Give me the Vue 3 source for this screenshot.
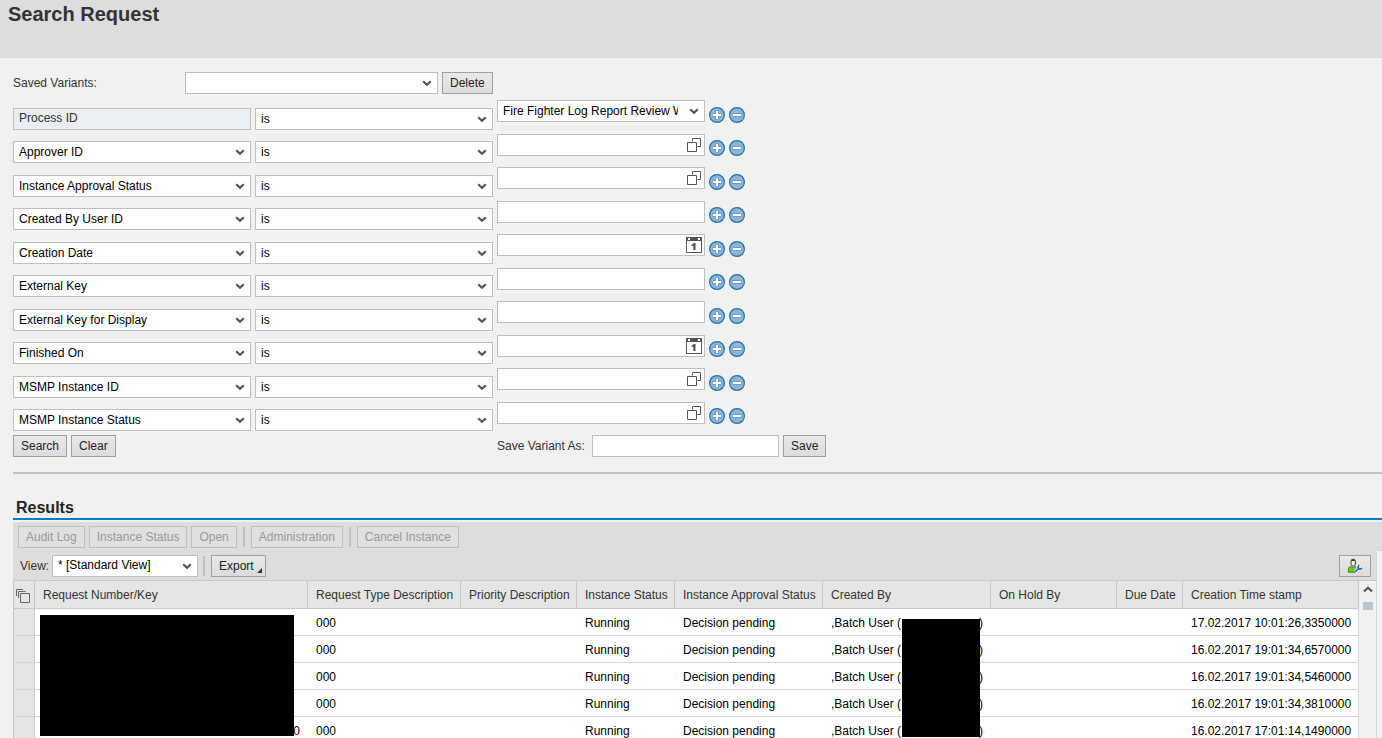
<script setup>
import { ref } from 'vue'

const criteria = ref([
  { label: 'Process ID', kind: 'select' },
  { label: 'Approver ID', kind: 'lookup' },
  { label: 'Instance Approval Status', kind: 'lookup' },
  { label: 'Created By User ID', kind: 'text' },
  { label: 'Creation Date', kind: 'date' },
  { label: 'External Key', kind: 'text' },
  { label: 'External Key for Display', kind: 'text' },
  { label: 'Finished On', kind: 'date' },
  { label: 'MSMP Instance ID', kind: 'lookup' },
  { label: 'MSMP Instance Status', kind: 'lookup' }
])

const columns = [
  'Request Number/Key', 'Request Type Description', 'Priority Description',
  'Instance Status', 'Instance Approval Status', 'Created By', 'On Hold By',
  'Due Date', 'Creation Time stamp'
]

const rows = [
  { key: '', stamp: '17.02.2017 10:01:26,3350000' },
  { key: '', stamp: '16.02.2017 19:01:34,6570000' },
  { key: '', stamp: '16.02.2017 19:01:34,5460000' },
  { key: '', stamp: '16.02.2017 19:01:34,3810000' },
  { key: '0', stamp: '16.02.2017 17:01:14,1490000' }
]
</script>

<template>
  <div class="page">
    <header class="title-bar"><h1>Search Request</h1></header>

    <form class="search" @submit.prevent>
      <div class="variants">
        <label for="variants">Saved Variants:</label>
        <span class="drop variant-drop">
          <select id="variants"><option></option></select>
          <svg class="chevron" viewBox="0 0 10 7"><path d="M1.2 1.2 5 4.8 8.8 1.2" /></svg>
        </span>
        <button type="button" class="btn">Delete</button>
      </div>

      <div v-for="(c, i) in criteria" :key="c.label" class="criterion">
        <input v-if="i === 0" class="field name readonly" :value="c.label" readonly aria-label="Criterion 1" />
        <span v-else class="drop name">
          <select :aria-label="'Criterion ' + (i + 1)"><option>{{ c.label }}</option></select>
          <svg class="chevron" viewBox="0 0 10 7"><path d="M1.2 1.2 5 4.8 8.8 1.2" /></svg>
        </span>
        <span class="drop name">
          <select :aria-label="c.label + ' operator'"><option>is</option></select>
          <svg class="chevron" viewBox="0 0 10 7"><path d="M1.2 1.2 5 4.8 8.8 1.2" /></svg>
        </span>
        <span v-if="c.kind === 'select'" class="drop value">
          <select :aria-label="c.label + ' value'"><option>Fire Fighter Log Report Review Workflow</option></select>
          <svg class="chevron" viewBox="0 0 10 7"><path d="M1.2 1.2 5 4.8 8.8 1.2" /></svg>
        </span>
        <span v-else class="value">
          <input class="field" :aria-label="c.label + ' value'" />
          <button v-if="c.kind === 'lookup'" type="button" class="icon-btn" :aria-label="'Look up ' + c.label">
            <svg width="16" height="16" viewBox="0 0 16 16" fill="none" stroke="#555">
              <path d="M6.500 4.500V1.500H14.500V9.500H11.500M1.500 5.500H10.500V14.500H1.500Z" />
            </svg>
          </button>
          <button v-if="c.kind === 'date'" type="button" class="icon-btn" :aria-label="'Pick ' + c.label">
            <svg width="16" height="16" viewBox="0 0 16 16">
              <path d="M.5 .5H15.500V15.500H.5Z" fill="#fff" stroke="#555" />
              <path d="M0 0H16V4H0Z" fill="#555" />
              <path d="M2 1H4V3H2ZM12 1H14V3H12Z" fill="#fff" />
              <path d="M5.500 7.800 8 6H9.500V13H7.300V8.600L5.500 9.300Z" fill="#555" />
            </svg>
          </button>
        </span>
        <button type="button" class="round" :aria-label="'Add ' + c.label">
          <svg width="16" height="16" viewBox="0 0 16 16">
            <circle cx="8" cy="8" r="7.400" fill="#8fb4da" stroke="#2272a4" stroke-width="1.200" />
            <path d="M8 3.500V12.500M3.500 8H12.500" stroke="#6a9cc8" stroke-width="4" />
            <path d="M8 4V12M4 8H12" stroke="#fff" stroke-width="2" />
          </svg>
        </button>
        <button type="button" class="round" :aria-label="'Remove ' + c.label">
          <svg width="16" height="16" viewBox="0 0 16 16">
            <circle cx="8" cy="8" r="7.400" fill="#8fb4da" stroke="#2272a4" stroke-width="1.200" />
            <path d="M3.500 8H12.500" stroke="#6a9cc8" stroke-width="4" />
            <path d="M4 8H12" stroke="#fff" stroke-width="2" />
          </svg>
        </button>
      </div>

      <div class="actions">
        <div class="submit">
          <button type="submit" class="btn">Search</button>
          <button type="reset" class="btn">Clear</button>
        </div>
        <label for="save-as">Save Variant As:</label>
        <input id="save-as" class="field save-name" />
        <button type="button" class="btn">Save</button>
      </div>
    </form>

    <section class="results">
      <h2>Results</h2>
      <div class="toolbar">
        <button type="button" class="btn" disabled>Audit Log</button>
        <button type="button" class="btn" disabled>Instance Status</button>
        <button type="button" class="btn" disabled>Open</button>
        <i class="sep"></i>
        <button type="button" class="btn" disabled>Administration</button>
        <i class="sep"></i>
        <button type="button" class="btn" disabled>Cancel Instance</button>
      </div>
      <div class="panel">
        <div class="toolbar view-bar">
          <label for="view">View:</label>
          <span class="drop view-drop">
            <select id="view"><option>* [Standard View]</option></select>
            <svg class="chevron" viewBox="0 0 10 7"><path d="M1.2 1.2 5 4.8 8.8 1.2" /></svg>
          </span>
          <i class="sep"></i>
          <button type="button" class="btn export">Export
            <svg width="5" height="5" viewBox="0 0 5 5"><path d="M5 0V5H0Z" fill="#333" /></svg>
          </button>
          <button type="button" class="btn personalize" aria-label="Personalize">
            <svg width="18" height="18" viewBox="0 0 18 18">
              <path d="M1.500 16V12.500Q1.500 10 4 9.500L6.500 11 9 9.500Q11 10 11 12.500L9 16Z" fill="#7ac51b" stroke="#2d7b2a" />
              <ellipse cx="7" cy="5.200" rx="2.600" ry="3.700" fill="#fff" stroke="#555" stroke-width="1.200" />
              <path d="M4.500 4Q5 1 7 1.200T9.500 4Q7 2.500 4.500 4Z" fill="#444" />
              <path d="M9 15.500 13 12M13.500 8Q11.800 10 13 11.700T17 11.200" stroke="#fff" stroke-width="4" fill="none" />
              <path d="M9 15.500 13 12M13.500 8Q11.800 10 13 11.700T17 11.200" stroke="#1c70b4" stroke-width="2" fill="none" />
            </svg>
          </button>
        </div>
        <div class="grid">
          <table>
            <colgroup>
              <col class="c-mark" /><col class="c-key" /><col class="c-type" /><col class="c-prio" />
              <col class="c-status" /><col class="c-approval" /><col class="c-created" />
              <col class="c-hold" /><col class="c-due" /><col />
            </colgroup>
            <thead>
              <tr>
                <th class="mark">
                  <svg width="14" height="14" viewBox="0 0 14 14" fill="none" stroke="#666">
                    <path d="M.5 7V.5H7M2.500 9V2.500H9.500M4.500 4.500H13.500V13.500H4.500Z" />
                  </svg>
                </th>
                <th v-for="c in columns" :key="c">{{ c }}</th>
              </tr>
            </thead>
            <tbody>
              <tr v-for="r in rows" :key="r.stamp">
                <td class="mark"></td>
                <td class="key">{{ r.key }}</td>
                <td>000</td>
                <td></td>
                <td>Running</td>
                <td>Decision pending</td>
                <td><span class="creator"><span>,Batch User (</span><span>)</span></span></td>
                <td></td>
                <td></td>
                <td>{{ r.stamp }}</td>
              </tr>
            </tbody>
          </table>
          <div class="scrollbar">
            <svg width="10" height="7" viewBox="0 0 10 7"><path d="M1 5.500 5 1.700 9 5.500" fill="none" stroke="#555" stroke-width="2.200" /></svg>
            <i class="thumb"></i>
          </div>
          <i class="mask mask-key"></i>
          <i class="mask mask-user"></i>
        </div>
      </div>
    </section>
  </div>
</template>

<style>
html, body { height: 100%; overflow: hidden; background: #f1f1f1; }
</style>

<style scoped>
.page, .page button, .page input, .page select {
  font-family: "Liberation Sans", Arial, sans-serif;
  font-size: 12px;
}
.page { color: #333; line-height: 16px; }
.page * { box-sizing: border-box; }
.title-bar { height: 58px; padding: 2px 8px; background: #ddd; }
h1 { margin: 0; font-size: 20px; line-height: 24px; color: #333; }

.search {
  display: flex;
  flex-direction: column;
  margin-left: 13px;
  padding: 14px 0 15px;
  border-bottom: 2px solid #c0c0c0;
}
.variants { display: flex; align-items: center; gap: 4px; margin-bottom: 6px; }
.variants label { width: 168px; }
.variant-drop { width: 253px; }

.field, .drop select {
  display: block;
  width: 100%;
  height: 22px;
  margin: 0;
  padding: 0 5px 2px;
  border: 1px solid #bfbfbf;
  border-radius: 0;
  background: #fff;
  color: #000;
  outline: 0;
}
.drop { position: relative; display: block; }
.drop select { appearance: none; padding: 0 26px 1px 5px; }
.chevron {
  position: absolute;
  right: 6px;
  top: 8px;
  width: 10px;
  height: 7px;
  pointer-events: none;
}
.chevron path { fill: none; stroke: #555; stroke-width: 2.2; }

.criterion { display: flex; gap: 4px; height: 33px; }
.criterion:nth-child(odd) { height: 34px; }
.criterion:nth-child(odd) .value { margin-top: 1px; }
.criterion .name { width: 238px; margin-top: 8px; }
.criterion .readonly { background: #eaeef1; color: #333; }
.value { position: relative; width: 208px; }
.icon-btn, .round {
  width: 16px;
  height: 16px;
  padding: 0;
  border: 0;
  background: none;
}
.icon-btn { position: absolute; right: 3px; top: 3px; }
.icon-btn svg, .round svg { display: block; }
.round { margin-top: 7px; }

.btn {
  height: 22px;
  padding: 0 7px;
  border: 1px solid #a0a0a0;
  border-radius: 0;
  background: linear-gradient(#e9e9e9, #dcdcdc);
  color: #222;
  white-space: nowrap;
}
.btn:disabled { border-color: #bfbfbf; background: #e0e0e0; color: #999; }

.actions { display: flex; align-items: center; gap: 4px; }
.submit { display: flex; gap: 4px; width: 480px; }
.actions label { width: 91px; }
.save-name { width: 187px; }

.results { margin-left: 13px; padding-top: 22px; }
h2 {
  margin: 0 0 2px;
  padding: 2px 3px 0;
  border-bottom: 2px solid #007fc5;
  font-size: 16px;
  line-height: 20px;
  color: #222;
}
.toolbar { display: flex; align-items: center; gap: 4px; height: 29px; padding: 0 5px; background: #ddd; }
.sep { width: 2px; height: 20px; margin: 0 2px; background: #c0c0c0; }
.panel { margin-right: 5px; border-right: 1px solid #d8d8d8; }
.view-bar { padding: 0 5px 0 7px; }
.view-bar label { width: 28px; }
.view-bar .sep { margin-left: 1px; }
.view-drop { width: 146px; }
.export { position: relative; width: 55px; text-align: left; }
.export svg { position: absolute; right: 3px; bottom: 3px; }
.personalize { display: flex; align-items: center; justify-content: center; width: 32px; margin-left: auto; }

.grid { position: relative; display: flex; }
table { flex: 1; width: 0; table-layout: fixed; border-collapse: separate; border-spacing: 0; background: #fff; }
.c-mark { width: 22px; }
.c-key { width: 273px; }
.c-type { width: 153px; }
.c-prio { width: 116px; }
.c-status { width: 98px; }
.c-approval { width: 148px; }
.c-created { width: 168px; }
.c-hold { width: 126px; }
.c-due { width: 66px; }
th, td { padding: 0 0 0 8px; text-align: left; white-space: nowrap; font-weight: normal; }
th {
  height: 29px;
  border: 1px solid #c8c8c8;
  border-left: 0;
  background: #e5e5e5;
  color: #333;
}
td { height: 27px; padding-top: 2px; border-bottom: 1px solid #d4d4d4; color: #000; }
td:last-child { border-right: 1px solid #d4d4d4; }
.mark { padding: 2px 0 0 2px; border-left: 1px solid #c8c8c8; border-right: 1px solid #c8c8c8; background: #e5e5e5; }
.mark svg { display: block; }
.key { padding-right: 8px; text-align: right; }
.creator { display: flex; justify-content: space-between; width: 152px; }

.scrollbar {
  display: flex;
  flex-direction: column;
  align-items: center;
  gap: 9px;
  width: 17px;
  padding-top: 5px;
  background: #f1f1f1;
  border-top: 1px solid #c8c8c8;
}
.thumb { width: 10px; height: 8px; background: #b8c5d3; }
.mask { position: absolute; background: #000; }
.mask-key { left: 27px; top: 35px; width: 254px; height: 121px; }
.mask-user { left: 889px; top: 39px; width: 78px; height: 118px; }
</style>
